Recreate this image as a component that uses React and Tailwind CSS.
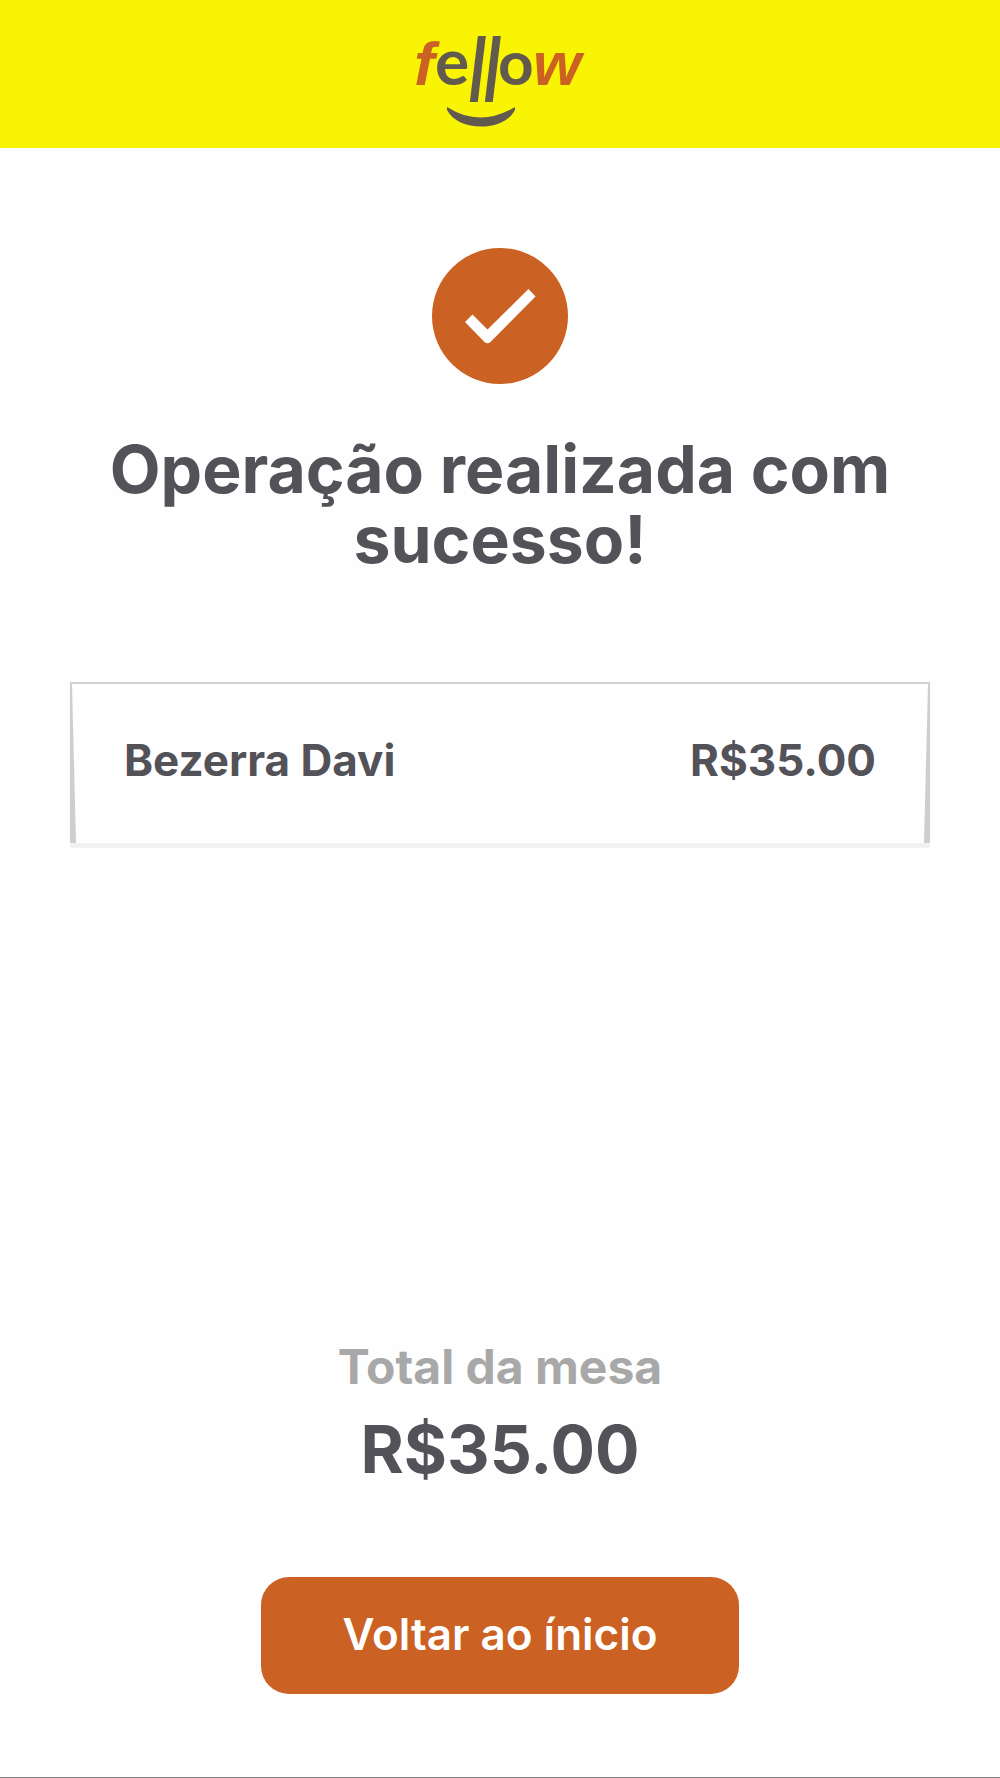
import { clsx } from 'clsx';

const pagamentos = [{ id: 1, nome: 'Bezerra Davi', valor: 35 }];

const formatar = (valor) => `R$${valor.toFixed(2)}`;

function Logo() {
  return (
    <svg
      viewBox="0 0 180 148"
      className="w-[180px] h-[148px] overflow-visible"
      role="img"
      aria-label="fellow"
    >
      <g fill="#625a4f" className="font-['Lato',sans-serif]">
        <text x="25" y="85" fontSize="64" fontWeight="700">e</text>
        <text x="57" y="102" fontSize="90" fontWeight="400" fontStyle="italic">l</text>
        <text x="72" y="102" fontSize="90" fontWeight="400" fontStyle="italic">l</text>
        <text x="88" y="85" fontSize="62" fontWeight="700">o</text>
        <path d="M37 107 Q70 128 105 107 L105 110 C94 132 48 132 37 110 Z" />
      </g>
      <g fill="#cb6122" fontSize="62" fontWeight="700" fontStyle="italic" className="font-['Liberation_Sans',sans-serif]">
        <text x="4" y="85">f</text>
        <text x="123" y="85">w</text>
      </g>
    </svg>
  );
}

function IconeSucesso() {
  return (
    <svg viewBox="0 0 136 136" className="w-[136px] h-[136px]" aria-hidden="true">
      <circle cx="68" cy="68" r="68" fill="#cb6122" />
      <path d="M33 74 L40.500 66.500 L55.500 81.500 L96.500 41 L103.500 48.500 L58.500 94 Q55.500 96.500 52.500 94 Z" fill="#fff" />
    </svg>
  );
}

function Lateral({ direita }) {
  return (
    <div
      className={clsx(
        'w-[6px] shrink-0 bg-[#cecece]',
        direita
          ? '[clip-path:polygon(4px_0,100%_0,100%_100%,0_100%)]'
          : '[clip-path:polygon(0_0,2px_0,100%_100%,0_100%)]'
      )}
    />
  );
}

export default function App() {
  const total = pagamentos.reduce((soma, p) => soma + p.valor, 0);

  return (
    <div className="min-h-screen flex flex-col bg-[#fefefe] border-b border-[#888888] font-['Inter',sans-serif] font-bold text-[#525258]">
      <header className="flex justify-center bg-[#f9f304]">
        <Logo />
      </header>

      <main className="grow flex flex-col items-center px-[70px] pt-[100px] pb-[83px]">
        <IconeSucesso />
        <h1 className="mt-[50px] text-center text-[66px] leading-[70px]">
          Operação realizada com sucesso!
        </h1>

        <ul className="w-full mt-[108px]">
          {pagamentos.map((p) => (
            <li key={p.id} className="border-t-2 border-b-[5px] border-t-[#d2d2d2] border-b-[#f1f1f1]">
              <div className="flex">
                <Lateral />
                <div className="grow h-[159px] flex items-center justify-between px-12 pb-2 text-[44px]">
                  <span>{p.nome}</span>
                  <span>{formatar(p.valor)}</span>
                </div>
                <Lateral direita />
              </div>
            </li>
          ))}
        </ul>

        <div className="mt-auto text-center">
          <p className="text-[48px] leading-[60px] text-[#a8a8a8]">Total da mesa</p>
          <p className="mt-3 text-[66px] leading-[80px]">{formatar(total)}</p>
        </div>

        <button
          type="button"
          className="mt-[88px] w-[478px] h-[117px] pb-1 rounded-[28px] bg-[#cb6122] text-[44px] font-semibold text-white"
        >
          Voltar ao ínicio
        </button>
      </main>
    </div>
  );
}
